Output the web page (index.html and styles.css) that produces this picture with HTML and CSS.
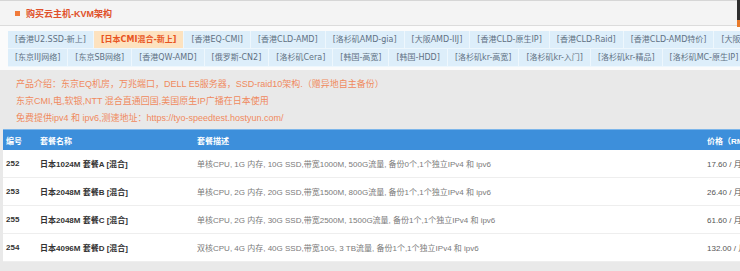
FILE: index.html
```html
<!DOCTYPE html>
<html>
    <head>
        <meta charset="UTF-8">
        <title>购买云主机-KVM架构</title>
        <link rel="stylesheet" href="styles.css">
    </head>
    <body>
        <div class="topbar">
            <span class="dot"></span>
            <span class="title">购买云主机-KVM架构</span>
        </div>
        <div class="corner"></div>

        <div class="tabs-panel">
            <div class="tab-row">
                <a class="tab">[香港U2.SSD-新上]</a>
                <a class="tab active">[日本CMI混合-新上]</a>
                <a class="tab">[香港EQ-CMI]</a>
                <a class="tab">[香港CLD-AMD]</a>
                <a class="tab">[洛杉矶AMD-gia]</a>
                <a class="tab">[大阪AMD-IIJ]</a>
                <a class="tab">[香港CLD-原生IP]</a>
                <a class="tab">[香港CLD-Raid]</a>
                <a class="tab">[香港CLD-AMD特价]</a>
                <a class="tab">[大阪AMD-CN2]</a>
            </div>
            <div class="tab-row">
                <a class="tab">[东京IIJ网络]</a>
                <a class="tab">[东京SB网络]</a>
                <a class="tab">[香港QW-AMD]</a>
                <a class="tab">[俄罗斯-CN2]</a>
                <a class="tab">[洛杉矶Cera]</a>
                <a class="tab">[韩国-高宽]</a>
                <a class="tab">[韩国-HDD]</a>
                <a class="tab">[洛杉矶kr-高宽]</a>
                <a class="tab">[洛杉矶kr-入门]</a>
                <a class="tab">[洛杉矶kr-精品]</a>
                <a class="tab">[洛杉矶MC-原生IP]</a>
            </div>
        </div>

        <div class="intro">
            <p>产品介绍：东京EQ机房，万兆端口，DELL E5服务器，SSD-raid10架构.（赠异地自主备份）</p>
            <p>东京CMI,电,软银,NTT 混合直通回国,美国原生IP广播在日本使用</p>
            <p>免费提供ipv4 和 ipv6,测速地址：https://tyo-speedtest.hostyun.com/</p>
        </div>

        <table class="plans">
            <colgroup>
                <col class="col-id">
                <col class="col-name">
                <col class="col-desc">
                <col class="col-price">
            </colgroup>
            <thead>
                <tr>
                    <th>编号</th>
                    <th>套餐名称</th>
                    <th>套餐描述</th>
                    <th>价格（RMB）</th>
                </tr>
            </thead>
            <tbody>
                <tr>
                    <td class="num">252</td>
                    <td class="name">日本1024M 套餐A [混合]</td>
                    <td class="desc">单核CPU, 1G 内存, 10G SSD,带宽1000M, 500G流量, 备份0个,1个独立IPv4 和 ipv6</td>
                    <td class="price">17.60 / 月</td>
                </tr>
                <tr>
                    <td class="num">253</td>
                    <td class="name">日本2048M 套餐B [混合]</td>
                    <td class="desc">单核CPU, 2G 内存, 20G SSD,带宽1500M, 800G流量, 备份1个,1个独立IPv4 和 ipv6</td>
                    <td class="price">26.40 / 月</td>
                </tr>
                <tr>
                    <td class="num">255</td>
                    <td class="name">日本2048M 套餐C [混合]</td>
                    <td class="desc">单核CPU, 2G 内存, 30G SSD,带宽2500M, 1500G流量, 备份1个,1个独立IPv4 和 ipv6</td>
                    <td class="price">61.60 / 月</td>
                </tr>
                <tr>
                    <td class="num">254</td>
                    <td class="name">日本4096M 套餐D [混合]</td>
                    <td class="desc">双核CPU, 4G 内存, 40G SSD,带宽10G, 3 TB流量, 备份1个,1个独立IPv4 和 ipv6</td>
                    <td class="price">132.00 / 月</td>
                </tr>
            </tbody>
        </table>
    </body>
</html>
```

FILE: styles.css
```css
html, body{
    overflow:hidden;
}

body{
    margin:0;
    background-color:#e9e9e9;
    font-family:"Liberation Sans", "Noto Sans CJK SC", sans-serif;
}

p{
    margin:0;
}

.topbar{
    display:flex;
    align-items:center;
    height:26px;
    padding-left:15px;
    background-color:#f4f4f4;
    border-top:1px solid #d6d6d6;
    border-bottom:1px solid #dcdcdc;
    box-sizing:border-box;
}

.dot{
    width:5px;
    height:5px;
    background-color:#f07a3a;
    margin-right:6px;
}

.title{
    font-size:9px;
    font-weight:bold;
    color:#e0502a;
}

.corner{
    position:absolute;
    top:0;
    right:0;
    width:3px;
    height:27px;
    background:linear-gradient(#2e2e2e 75%, #e87a2a 75%);
}

.tabs-panel{
    background-color:#fbfbfb;
    padding:5px 0 3px 8px;
}

.tab-row{
    display:flex;
    white-space:nowrap;
}

.tab{
    font-family:"DejaVu Sans", "Noto Sans CJK SC", sans-serif;
    font-size:8px;
    line-height:17px;
    padding:0 7px;
    color:#5f7183;
    background-color:#ddeefa;
    border-right:1px solid #eef7fd;
    border-bottom:1px solid #eef7fd;
}

.tab.active{
    background-color:#fde2bf;
    color:#e8541e;
    font-weight:bold;
}

.intro{
    padding:6px 0 2px 16px;
    font-size:9px;
    line-height:17px;
    color:#f08a5e;
    white-space:nowrap;
}

.plans{
    margin-left:3px;
    width:840px;
    table-layout:fixed;
    border-collapse:collapse;
    background-color:#fff;
    font-size:8px;
}

.col-id{
    width:34px;
}

.col-name{
    width:157px;
}

.col-desc{
    width:510px;
}

.plans th{
    background-color:#3d8fdb;
    border-top:1px solid #7db6ea;
    color:#fff;
    font-weight:bold;
    text-align:left;
    height:20px;
    padding:0 0 0 3px;
    white-space:nowrap;
}

.plans td{
    height:27px;
    padding:0 0 0 3px;
    border-bottom:1px solid #eeeeee;
    white-space:nowrap;
    color:#333;
}

.num, .name{
    font-weight:bold;
}

.desc{
    color:#7a7a7a !important;
}

.price{
    color:#555 !important;
}
```
